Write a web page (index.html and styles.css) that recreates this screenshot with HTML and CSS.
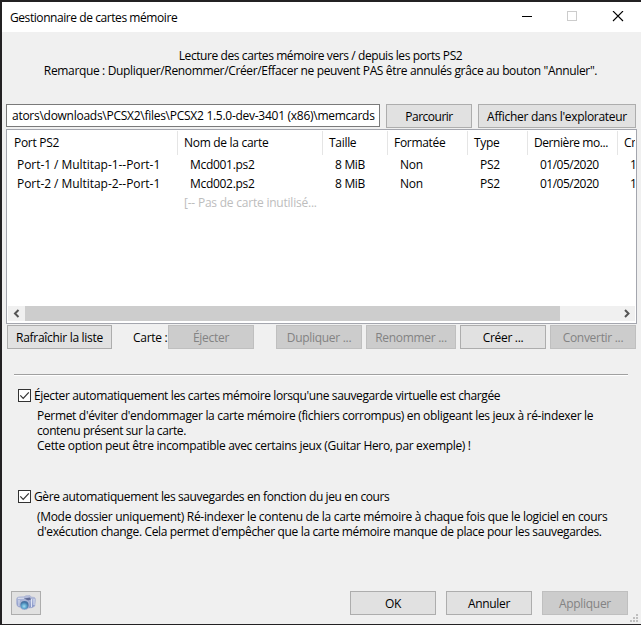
FILE: index.html
```html
<!DOCTYPE html>
<html lang="fr">
<head>
<meta charset="utf-8">
<title>Gestionnaire de cartes mémoire</title>
<link rel="stylesheet" href="styles.css">
</head>
<body>
<div class="window">
  <header class="titlebar">
    <span class="t-title">Gestionnaire de cartes mémoire</span>
    <svg class="controls" width="103" height="12" viewBox="0 0 103 12" fill="none" shape-rendering="crispEdges">
      <path d="M0 5.5H10" stroke="#000"/>
      <rect x="45.5" y=".5" width="9" height="9" stroke="#ccc"/>
      <path d="M91 0L101 10M101 0L91 10" stroke="#000" stroke-width="1.1" shape-rendering="auto"/>
    </svg>
  </header>
  <main>
    <div class="intro">
      <p class="t-intro1">Lecture des cartes mémoire vers / depuis les ports PS2</p>
      <p class="t-intro2">Remarque : Dupliquer/Renommer/Créer/Effacer ne peuvent PAS être annulés grâce au bouton "Annuler".</p>
    </div>
    <div class="folder">
      <div class="path"><span class="t-path">ators\downloads\PCSX2\files\PCSX2 1.5.0-dev-3401 (x86)\memcards</span></div>
      <button class="std browse">Parcourir</button>
      <button class="explore">Afficher dans l'explorateur</button>
    </div>
    <section class="list">
      <div class="row head"><span>Port PS2</span><span class="t-nom">Nom de la carte</span><span>Taille</span><span>Formatée</span><span>Type</span><span class="t-mod">Dernière mo...</span><span>Cr</span></div>
      <div class="row"><span class="t-port">Port-1 / Multitap-1--Port-1</span><span>Mcd001.ps2</span><span>8 MiB</span><span>Non</span><span>PS2</span><span class="t-date">01/05/2020</span><span>1</span></div>
      <div class="row"><span class="t-port">Port-2 / Multitap-2--Port-1</span><span>Mcd002.ps2</span><span>8 MiB</span><span>Non</span><span>PS2</span><span class="t-date">01/05/2020</span><span>1</span></div>
      <div class="row unused"><span></span><span>[-- Pas de carte inutilisé...</span></div>
      <div class="scroll">
        <svg width="17" height="15" viewBox="0 0 17 15"><path d="M10.500 4L7 7.500L10.500 11" fill="none" stroke="#555" stroke-width="2"/></svg>
        <div class="thumb"></div>
        <svg class="right" width="17" height="15" viewBox="0 0 17 15"><path d="M7 4L10.500 7.500L7 11" fill="none" stroke="#555" stroke-width="2"/></svg>
      </div>
    </section>
    <div class="actions">
      <button class="refresh">Rafraîchir la liste</button>
      <span class="label">Carte :</span>
      <button class="std eject" disabled>Éjecter</button>
      <button class="std duplicate" disabled>Dupliquer ...</button>
      <button class="rename" disabled>Renommer ...</button>
      <button class="std">Créer ...</button>
      <button class="std" disabled>Convertir ...</button>
    </div>
    <div class="rule"></div>
    <section class="option">
      <div class="check"><svg width="13" height="13" viewBox="0 0 13 13"><rect x=".5" y=".5" width="12" height="12" fill="#fff" stroke="#333"/><path d="M2.3 6.4L5.2 9.3L10.8 3.3" fill="none" stroke="#333" stroke-width="1.2"/></svg><span class="t-opt1">Éjecter automatiquement les cartes mémoire lorsqu'une sauvegarde virtuelle est chargée</span></div>
      <p class="t-a1">Permet d'éviter d'endommager la carte mémoire (fichiers corrompus) en obligeant les jeux à ré-indexer le</p>
      <p class="t-a2">contenu présent sur la carte.</p>
      <p class="t-a3">Cette option peut être incompatible avec certains jeux (Guitar Hero, par exemple) !</p>
    </section>
    <section class="option second">
      <div class="check"><svg width="13" height="13" viewBox="0 0 13 13"><rect x=".5" y=".5" width="12" height="12" fill="#fff" stroke="#333"/><path d="M2.3 6.4L5.2 9.3L10.8 3.3" fill="none" stroke="#333" stroke-width="1.2"/></svg><span class="t-opt2">Gère automatiquement les sauvegardes en fonction du jeu en cours</span></div>
      <p class="t-b1">(Mode dossier uniquement) Ré-indexer le contenu de la carte mémoire à chaque fois que le logiciel en cours</p>
      <p class="t-b2">d'exécution change. Cela permet d'empêcher que la carte mémoire manque de place pour les sauvegardes.</p>
    </section>
    <footer>
      <button class="camera" aria-label="Capture">
        <svg width="20" height="16" viewBox="0 0 20 16">
          <defs>
            <linearGradient id="body" x2="0" y2="1"><stop stop-color="#b9c1dc"/><stop offset="1" stop-color="#8494c8"/></linearGradient>
            <radialGradient id="lens" cx=".45" cy=".65"><stop stop-color="#a5dcf0"/><stop offset=".6" stop-color="#5ba3cd"/><stop offset="1" stop-color="#4673a3"/></radialGradient>
          </defs>
          <path d="M.6 4Q.8 2 3 1.900L8 1.800L10 .7L14 .6L15 2L18.500 2.500Q19.500 3 19.400 5L18.800 11Q17 13 13 13L3 12Q.8 11.500 .7 9Z" fill="url(#body)" stroke="#a2abd0" stroke-width=".6"/>
          <path d="M2 3.400L8 3.200M15.500 4V12M3 5V11M18 4V10" stroke="#dfe4f2" stroke-width="1"/>
          <path d="M8 3.500L14 2.500L15 4.500L12 5.500Z" fill="#606b96"/>
          <circle cx="8.500" cy="9.700" r="5.200" fill="#aab4d4"/>
          <circle cx="8.500" cy="10.100" r="4.100" fill="url(#lens)"/>
        </svg>
      </button>
      <button class="std ok">OK</button>
      <button class="std">Annuler</button>
      <button class="std" disabled>Appliquer</button>
    </footer>
    <svg class="grip" width="8" height="8" viewBox="0 0 8 8" fill="#bfbfbf"><path d="M6 0h2v2h-2zM3 3h2v2h-2zM6 3h2v2h-2zM0 6h2v2h-2zM3 6h2v2h-2zM6 6h2v2h-2z"/></svg>
  </main>
</div>
</body>
</html>
```
FILE: styles.css
```css
* { box-sizing: border-box; }
body { margin: 0; }
p { margin: 0; }
body, button {
  font: 12px/15px "Open Sans", "Noto Sans", sans-serif;
  letter-spacing: -0.3px;
  color: #000;
}
.window {
  position: relative;
  width: 641px;
  height: 625px;
  overflow: hidden;
  border: solid #232123;
  border-width: 2px 0 1px 2px;
  background: #f0f0f0;
  white-space: nowrap;
}
.titlebar {
  display: flex;
  align-items: center;
  justify-content: space-between;
  height: 30px;
  padding: 0 16px 0 8px;
  background: #fff;
}
.t-title { letter-spacing: -0.43px; }
.t-intro1 { letter-spacing: -0.41px; }
.t-intro2 { letter-spacing: -0.35px; }
.t-path { letter-spacing: -0.27px; }
.t-mod { letter-spacing: -0.43px; }
.t-port { letter-spacing: -0.05px; }
.t-date { letter-spacing: -0.5px; }
.t-opt1 { letter-spacing: -0.38px; }
.t-opt2 { letter-spacing: -0.38px; }
.t-a1 { letter-spacing: -0.32px; }
.t-a2 { letter-spacing: -0.41px; }
.t-a3 { letter-spacing: -0.325px; }
.t-b1 { letter-spacing: -0.31px; }
.t-b2 { letter-spacing: -0.35px; }
.intro { padding: 16px 2px 0 0; height: 72px; text-align: center; }
.folder { display: flex; gap: 6px; height: 25px; padding-left: 4px; }
.path {
  width: 374px;
  height: 23px;
  padding: 3px 5px;
  border: 1px solid #7a7a7a;
  background: #fff;
  overflow: hidden;
}
button {
  display: flex;
  align-items: center;
  justify-content: center;
  flex: none;
  height: 24px;
  padding: 0;
  border: 1px solid #adadad;
  border-radius: 0;
  background: #e1e1e1;
}
button:disabled { border-color: #bfbfbf; background: #ccc; color: #838383; }
.std { width: 86px; }
.browse { letter-spacing: -0.5px; }
.explore { width: 158px; }
.list {
  display: flex;
  flex-direction: column;
  width: 631px;
  height: 195px;
  margin-left: 4px;
  padding: 1px;
  border: 1px solid #a4a6ae;
  background: #fff;
}
.row {
  display: grid;
  grid-template-columns: 170px 145px 65px 80px 60px 90px 1fr;
  height: 19px;
  line-height: 19px;
}
.row span { padding-left: 12px; }
.row span:first-child { padding-left: 9px; }
.head { height: 24px; line-height: 24px; }
.head span { padding-left: 6px; border-right: 1px solid #e5e5e5; }
.head span:first-child { padding-left: 6px; }
.head span:last-child { border: 0; overflow: hidden; }
.unused { color: #bdbdbd; letter-spacing: -0.22px; }
.unused span { padding-left: 6px; }
.scroll { display: flex; height: 15px; margin: auto 0 1px; background: #f0f0f0; }
.thumb { width: 535px; background: #cdcdcd; }
.right { margin-left: auto; }
.actions { display: flex; gap: 4px; height: 49px; padding: 1px 0 0 5px; }
.refresh { width: 105px; }
.label { margin: 5px -7px 0 17px; width: 38px; }
.eject { margin-right: 18px; }
.duplicate { margin-right: 0; }
.rename { width: 90px; }
.rule { width: 614px; height: 2px; margin: 1px 0 0 12px; border-top: 1px solid #a0a0a0; border-bottom: 1px solid #fff; }
.option { height: 101px; padding: 12px 0 0 35px; }
.check { display: flex; align-items: center; gap: 3px; height: 15px; margin: 0 0 5px -19px; }
.second { height: 114px; }
footer { display: flex; gap: 10px; padding-left: 9px; }
.camera { width: 30px; }
.ok { margin-left: 299px; }
.grip { position: absolute; right: 3px; bottom: 2px; }
```
